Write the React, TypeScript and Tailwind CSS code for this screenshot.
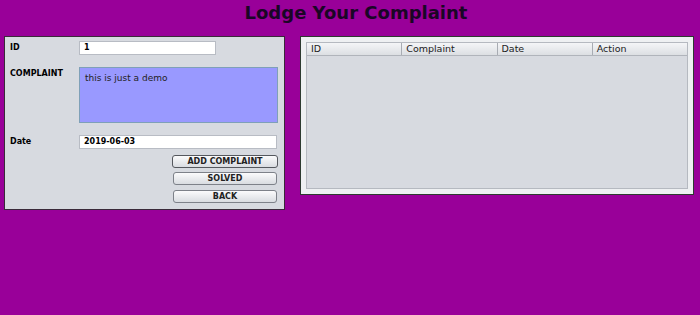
import React from "react";

const font = { fontFamily: '"DejaVu Sans", Verdana, sans-serif' };

function Field({ value, className }: { value: string; className: string }) {
  return (
    <div className={`h-[14px] border border-[#b8bcc4] bg-white px-[4px] text-[8px] font-bold leading-[12px] text-black ${className}`}>
      {value}
    </div>
  );
}

function Btn({ label, className = "" }: { label: string; className?: string }) {
  return (
    <div
      className={`flex h-[13px] items-center justify-center rounded-[3px] border border-[#7d8189] bg-gradient-to-b from-[#fbfbfc] to-[#d9dce1] text-[8px] font-bold text-[#222] ${className}`}
    >
      {label}
    </div>
  );
}

const cols = ["ID", "Complaint", "Date", "Action"];

export default function App() {
  return (
    <div className="h-[315px] w-[700px] overflow-hidden bg-[#990099]" style={font}>
      <h1 className="pl-[12px] pt-[2px] text-center text-[18px] font-bold leading-[21px] text-[#1a0626]">
        Lodge Your Complaint
      </h1>
      <div className="mt-[13px] flex items-start">
        {/* left form panel */}
        <div className="ml-[4px] h-[174px] w-[281px] border border-[#3a2a3a] bg-[#d7dae0] pt-[4px]">
          <div className="flex items-center">
            <span className="w-[74px] pl-[5px] text-[8px] font-bold text-black">ID</span>
            <Field value="1" className="w-[137px]" />
          </div>
          <div className="mt-[12px] flex items-start">
            <span className="w-[74px] pl-[5px] pt-[1px] text-[8px] font-bold text-black">COMPLAINT</span>
            <div className="h-[56px] w-[199px] border border-[#7fa0b8] bg-[#9999ff] px-[5px] pt-[4px] text-[9px] text-[#222]">
              this is just a demo
            </div>
          </div>
          <div className="mt-[12px] flex items-center">
            <span className="w-[74px] pl-[5px] text-[8px] font-bold text-black">Date</span>
            <Field value="2019-06-03" className="w-[198px]" />
          </div>
          <div className="mt-[6px] flex flex-col items-end pr-[6px]">
            <Btn label="ADD COMPLAINT" className="w-[106px] border-[#55585e]" />
            <Btn label="SOLVED" className="mr-[1px] mt-[4px] w-[104px]" />
            <Btn label="BACK" className="mr-[1px] mt-[5px] w-[104px]" />
          </div>
        </div>

        {/* right table panel */}
        <div className="ml-[15px] h-[159px] w-[394px] border border-[#2d3a30] bg-[#eef0f2] p-[5px]">
          <div className="h-full border border-[#b5b9c0] bg-[#d7dae0]">
            <div className="flex h-[13px] border-b border-[#b0b4bb] bg-gradient-to-b from-[#f4f5f7] to-[#dcdfe3]">
              {cols.map((c, i) => (
                <div
                  key={c}
                  className={`flex-1 pl-[4px] text-[9.5px] leading-[12px] text-[#222] ${i > 0 ? "border-l border-[#a8acb3]" : ""}`}
                >
                  {c}
                </div>
              ))}
            </div>
          </div>
        </div>
      </div>
    </div>
  );
}
